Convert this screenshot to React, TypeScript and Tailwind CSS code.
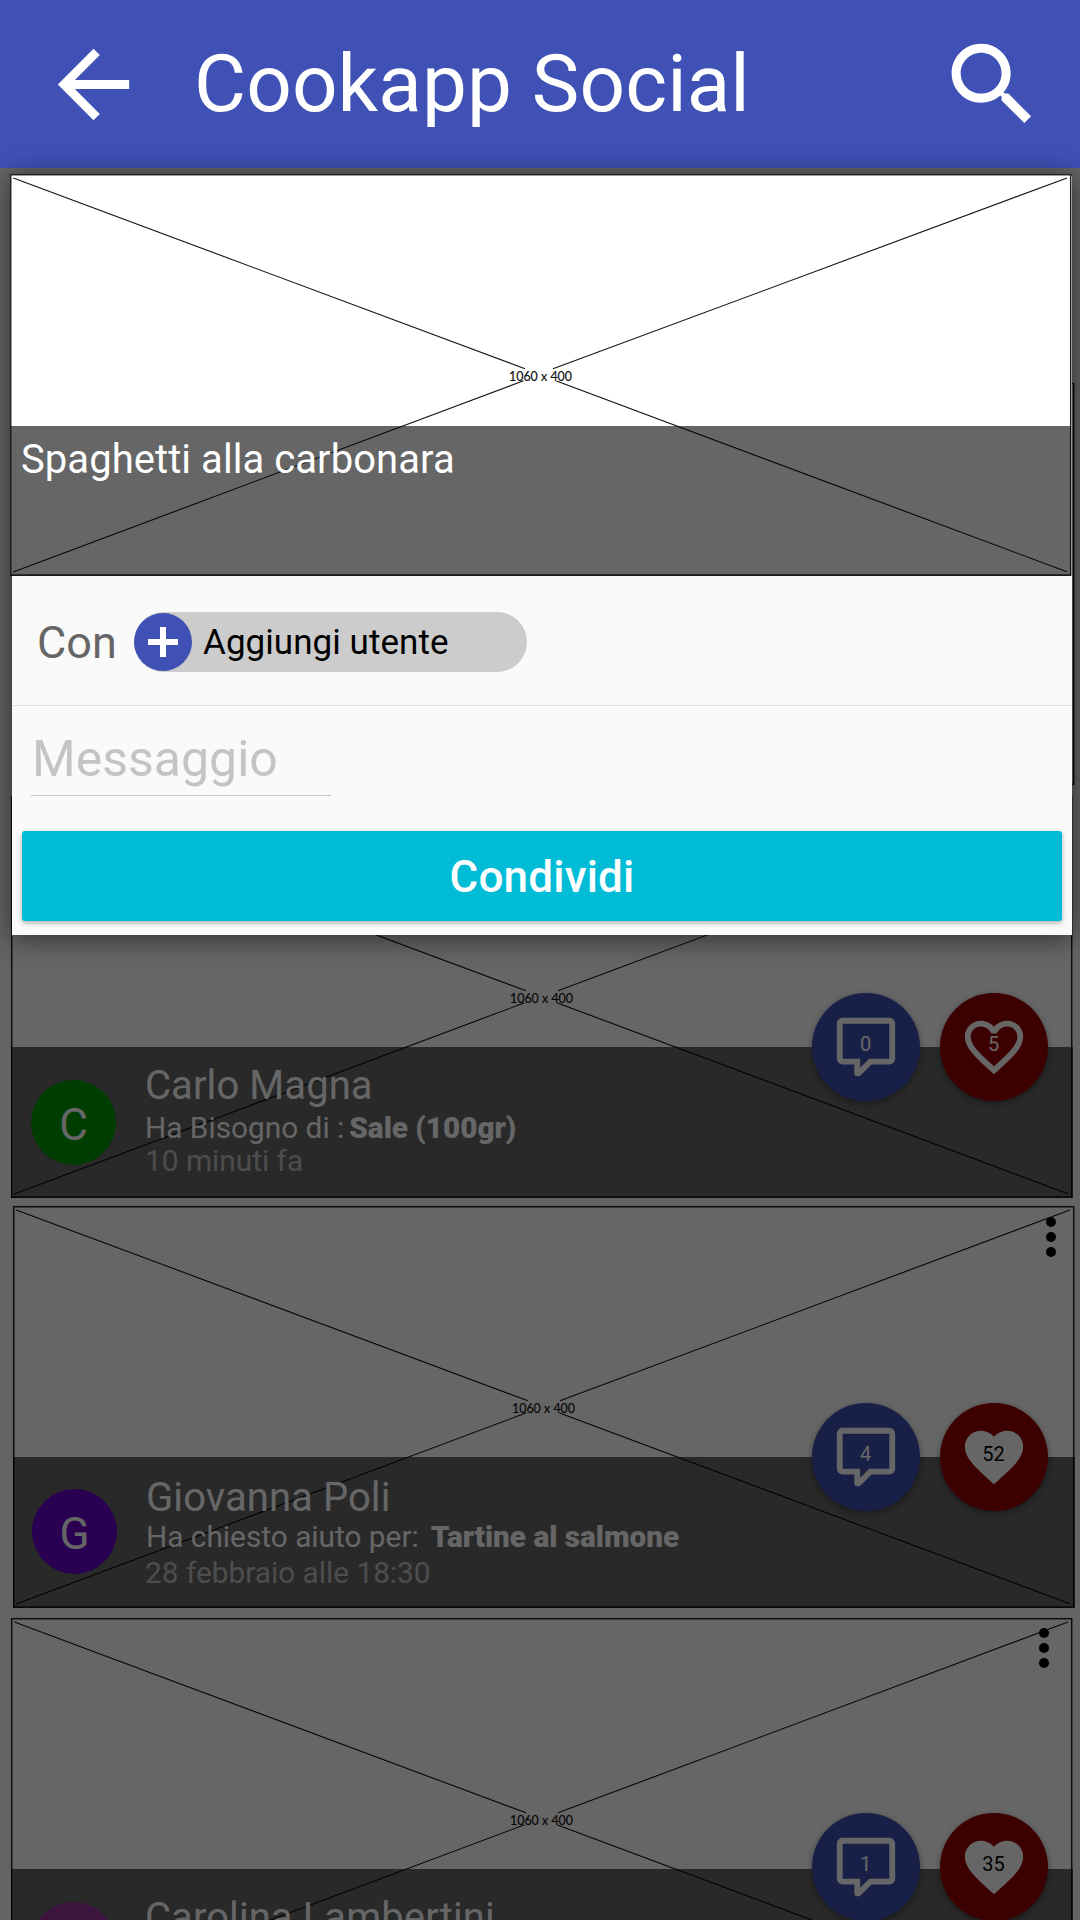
import React from "react";

type Post = {
  name: string;
  action?: string;
  subject?: string;
  time?: string;
  initial?: string;
  comments: string;
  likes: string;
  liked: boolean;
  card: string;
  avatar: string;
  avatarColor: string;
  menu: string;
  body: string;
  actionLine: string;
  timeLine: string;
  fabs: string;
};

const posts: Post[] = [
  {
    name: "Carlo Magna",
    action: "Ha Bisogno di :",
    subject: "Sale (100gr)",
    time: "10 minuti fa",
    initial: "C",
    comments: "0",
    likes: "5",
    liked: false,
    card: "ml-[11px] mt-[11px]",
    avatar: "ml-5 mt-[33px]",
    avatarColor: "bg-[#009900]",
    menu: "hidden",
    body: "ml-[29px] pt-[15px]",
    actionLine: "mt-px gap-[5px]",
    timeLine: "-mt-px",
    fabs: "left-[801px] top-[197px]",
  },
  {
    name: "Giovanna Poli",
    action: "Ha chiesto aiuto per:",
    subject: "Tartine al salmone",
    time: "28 febbraio alle 18:30",
    initial: "G",
    comments: "4",
    likes: "52",
    liked: true,
    card: "ml-[13px] mt-[8px]",
    avatar: "ml-[19px] mt-[32px]",
    avatarColor: "bg-[#6600cc]",
    menu: "left-[1008px] top-[1px]",
    body: "ml-[29px] pt-[17px]",
    actionLine: "-mt-[2px] gap-[12px]",
    timeLine: "-ml-px mt-[2px]",
    fabs: "left-[799px] top-[197px]",
  },
  {
    name: "Carolina Lambertini",
    comments: "1",
    likes: "35",
    liked: true,
    card: "ml-[11px] mt-[10px]",
    avatar: "ml-5 mt-[33px]",
    avatarColor: "bg-[#993399]",
    menu: "left-[1003px] top-0",
    body: "ml-[29px] pt-[25px]",
    actionLine: "",
    timeLine: "",
    fabs: "left-[801px] top-[195px]",
  },
];

function Placeholder({ rise = 547 }: { rise?: number }) {
  return (
    <svg className="absolute left-0 top-0 overflow-visible" width="1062" height="402" viewBox="0 0 1062 402">
      <rect x="0.7" y="0.7" width="1060" height="400.4" fill="#fff" stroke="#222" strokeWidth="1.5" />
      <g stroke="#111" strokeWidth="1.1">
        <path d={`M3.3 4L515 194.8M${rise} 194.8L1057 4M513.5 206.8L3.2 398M546.5 207L1057 397.8`} fill="none" />
      </g>
      <text
        x="499"
        y="207"
        textLength="63"
        lengthAdjust="spacingAndGlyphs"
        fontSize="14"
        fontFamily="Lato, sans-serif"
        fill="#111"
        stroke="#111"
        strokeWidth="0.2"
      >
        1060 x 400
      </text>
    </svg>
  );
}

function CommentIcon() {
  return (
    <svg className="size-[70px]" viewBox="0 0 24 24" fill="#fff">
      <path d="M9,22A1,1 0 0,1 8,21V18H4A2,2 0 0,1 2,16V4C2,2.89 2.9,2 4,2H20A2,2 0 0,1 22,4V16A2,2 0 0,1 20,18H13.9L10.2,21.71C10,21.9 9.75,22 9.5,22V22H9M10,16V19.08L13.08,16H20V4H4V16H10Z" />
    </svg>
  );
}

function HeartIcon({ filled }: { filled: boolean }) {
  return (
    <svg className="size-[70px]" viewBox="0 0 24 24" fill="#fff">
      {filled ? (
        <path d="M12,21.35L10.55,20.03C5.4,15.36 2,12.27 2,8.5C2,5.41 4.42,3 7.5,3C9.24,3 10.91,3.81 12,5.08C13.09,3.81 14.76,3 16.5,3C19.58,3 22,5.41 22,8.5C22,12.27 18.6,15.36 13.45,20.03L12,21.35Z" />
      ) : (
        <path d="M12.1,18.55L12,18.65L11.89,18.55C7.14,14.24 4,11.39 4,8.5C4,6.5 5.5,5 7.5,5C9.04,5 10.54,6 11.07,7.36H12.93C13.46,6 14.96,5 16.5,5C18.5,5 20,6.5 20,8.5C20,11.39 16.86,14.24 12.1,18.55M16.5,3C14.76,3 13.09,3.81 12,5.08C10.91,3.81 9.24,3 7.5,3C4.42,3 2,5.41 2,8.5C2,12.27 5.4,15.36 10.55,20.03L12,21.35L13.45,20.03C18.6,15.36 22,12.27 22,8.5C22,5.41 19.58,3 16.5,3Z" />
      )}
    </svg>
  );
}

function Fab({ color, label, labelColor, children }: { color: string; label: string; labelColor: string; children: React.ReactNode }) {
  return (
    <div className={`relative flex size-[108px] items-center justify-center rounded-full shadow-[0_2px_6px_rgba(0,0,0,0.4)] ${color}`}>
      {children}
      <span className={`absolute left-0 right-px top-[39px] text-center text-[20px] leading-[24px] ${labelColor}`}>{label}</span>
    </div>
  );
}

function PostCard({ post }: { post: Post }) {
  return (
    <article className={`relative flex h-[402px] w-[1062px] shrink-0 flex-col justify-end ${post.card}`}>
      <Placeholder />
      <svg className={`absolute size-[60px] ${post.menu}`} viewBox="0 0 24 24" fill="#000">
        <circle cx="12" cy="6" r="2" />
        <circle cx="12" cy="12" r="2" />
        <circle cx="12" cy="18" r="2" />
      </svg>
      <div className="relative flex h-[151px] items-start bg-black/60 text-white">
        <div className={`flex size-[85px] shrink-0 items-center justify-center rounded-full text-[44px] leading-none ${post.avatar} ${post.avatarColor}`}>
          {post.initial && <span className="pt-[5px]">{post.initial}</span>}
        </div>
        <div className={`flex flex-col whitespace-nowrap ${post.body}`}>
          <span className="text-[40px] leading-[48px] tracking-[0.08px]">{post.name}</span>
          {post.action && (
            <span className={`flex text-[29.8px] leading-[34px] ${post.actionLine}`}>
              <span>{post.action}</span>
              <span className="text-[29.7px] font-black">{post.subject}</span>
            </span>
          )}
          {post.time && (
            <span className={`text-[29.8px] leading-[34px] text-white/60 ${post.timeLine}`}>{post.time}</span>
          )}
        </div>
      </div>
      <div className={`absolute flex gap-5 ${post.fabs}`}>
        <Fab color="bg-[#3f51b5]" label={post.comments} labelColor="text-white">
          <CommentIcon />
        </Fab>
        <Fab color="bg-[#990000]" label={post.likes} labelColor={post.liked ? "text-black" : "text-white"}>
          <HeartIcon filled={post.liked} />
        </Fab>
      </div>
    </article>
  );
}

function Header() {
  return (
    <header className="relative z-20 flex h-[168px] shrink-0 items-center bg-[#3f51b5] pl-10 pr-[33px] text-white">
      <svg className="size-[107px]" viewBox="0 0 24 24" fill="currentColor">
        <path d="M20 11H7.83l5.59-5.59L12 4l-8 8 8 8 1.41-1.41L7.83 13H20v-2z" />
      </svg>
      <h1 className="ml-[47px] flex-1 whitespace-nowrap text-[80px] leading-[96px] tracking-[0.1px]">Cookapp Social</h1>
      <svg className="size-[109px]" viewBox="0 0 24 24" fill="currentColor">
        <path d="M15.5 14h-.79l-.28-.27C15.41 12.59 16 11.11 16 9.5 16 5.91 13.09 3 9.5 3S3 5.91 3 9.5 5.91 16 9.5 16c1.61 0 3.09-.59 4.23-1.57l.27.28v.79l5 4.99L20.49 19l-4.99-5zm-6 0C7.01 14 5 11.99 5 9.5S7.01 5 9.5 5 14 7.01 14 9.5 11.99 14 9.5 14z" />
      </svg>
    </header>
  );
}

function ShareDialog() {
  return (
    <section className="absolute left-[12px] top-[176px] z-30 flex h-[759px] w-[1060px] flex-col bg-[#fafafa] shadow-[0_0_26px_rgba(0,0,0,0.35),0_6px_24px_rgba(0,0,0,0.25)]">
      <div className="relative -ml-[2px] -mt-[2px] flex h-[402px] w-[1062px] shrink-0 flex-col justify-end">
        <Placeholder rise={543} />
        <div className="relative mx-px h-[150px] bg-black/60 pl-[10px] pt-[10px] text-[40px] leading-[48px] tracking-[0.06px] text-white">
          Spaghetti alla carbonara
        </div>
      </div>
      <div className="flex h-[130px] shrink-0 items-center border-b border-[#dcdcdc] pl-[25px] pt-[2px]">
        <span className="w-[97px] pt-[2px] text-[45px] leading-[54px] text-[#666]">Con</span>
        <div className="flex h-[60px] w-[393px] items-center rounded-full bg-[#ccc]">
          <span className="flex size-[58px] items-center justify-center rounded-full bg-[#3f51b5]">
            <svg className="size-[30px]" viewBox="0 0 30 30" stroke="#fff" strokeWidth="6">
              <path d="M15 0V30M0 15H30" />
            </svg>
          </span>
          <span className="ml-[11px] pt-[2px] text-[35px] leading-[42px] tracking-[0.05px] text-black">Aggiungi utente</span>
        </div>
      </div>
      <div className="ml-[19px] mt-[20px] h-[70px] w-[300px] shrink-0 border-b border-[#c4c4c4] pl-[1px] text-[50px] leading-[66px] text-[#c4c4c4]">
        Messaggio
      </div>
      <button className="mx-[10px] mt-[35px] h-[90px] shrink-0 rounded-[3px] bg-[#00bcd7] pt-[2px] text-[44px] font-medium tracking-[0.18px] text-white shadow-[0_2px_5px_rgba(0,0,0,0.3)]">
        Condividi
      </button>
    </section>
  );
}

export default function App() {
  return (
    <div className="relative flex h-[1920px] w-[1080px] flex-col overflow-hidden bg-[#fafafa] font-['Roboto',sans-serif]">
      <Header />
      <main className="flex flex-col pt-[215px]">
        <div className="relative ml-[13px] h-[402px] w-[1062px] shrink-0">
          <Placeholder />
        </div>
        {posts.map((post) => (
          <PostCard key={post.name} post={post} />
        ))}
      </main>
      <div className="absolute inset-0 z-10 bg-black/60" />
      <ShareDialog />
    </div>
  );
}
